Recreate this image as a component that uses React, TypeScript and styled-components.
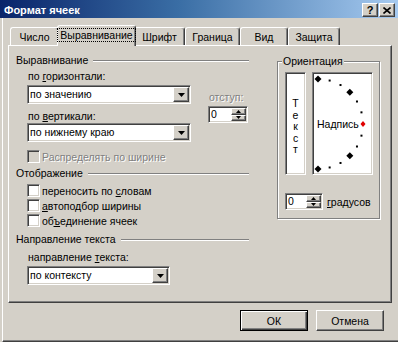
import React from "react";
import styled, { createGlobalStyle, css } from "styled-components";

const GlobalStyle = createGlobalStyle`
  html, body {
    margin: 0;
    padding: 0;
    background: #d4d0c8;
  }
  body {
    font-family: "Liberation Sans", Arial, sans-serif;
    font-size: 10.5px;
    color: #000;
  }
`;

const FACE = "#d4d0c8";
const SHADOW = "#808080";
const DARK = "#404040";

const sunken = css`
  border: 1px solid;
  border-color: ${SHADOW} #fff #fff ${SHADOW};
  box-shadow: inset 1px 1px 0 ${DARK}, inset -1px -1px 0 ${FACE};
  padding: 1px;
`;

const raised = css`
  border: 1px solid;
  border-color: #fff ${DARK} ${DARK} #fff;
  box-shadow: inset -1px -1px 0 ${SHADOW};
`;

const Window = styled.div`
  width: 398px;
  height: 342px;
  display: flex;
  flex-direction: column;
  background: ${FACE};
  overflow: hidden;
`;

const TitleBar = styled.div`
  flex: none;
  height: 18px;
  box-sizing: border-box;
  display: flex;
  align-items: flex-start;
  justify-content: space-between;
  padding: 3px 3px 0 4px;
  background: linear-gradient(90deg, #0a246a 0%, #3a6ea5 45%, #a6caf0 100%);
`;

const Title = styled.span`
  color: #fff;
  font-weight: bold;
  font-size: 11px;
  line-height: 14px;
`;

const CapButtons = styled.div`
  display: flex;
  gap: 1px;
`;

const CapButton = styled.div`
  box-sizing: border-box;
  width: 16px;
  height: 14px;
  background: ${FACE};
  ${raised};
  display: flex;
  align-items: center;
  justify-content: center;
  font-weight: bold;
  font-size: 11px;
  line-height: 12px;
`;

const Body = styled.div`
  flex: 1;
  margin-left: 2px;
  border-left: 1px solid #fff;
  border-bottom: 1px solid ${DARK};
  box-shadow: inset 0 -1px 0 ${SHADOW};
  padding: 7px 6px 0 5px;
  display: flex;
  flex-direction: column;
`;

const TabRow = styled.div`
  display: flex;
  align-items: flex-end;
  height: 20px;
  margin-left: 2px;
`;

const Tab = styled.div<{ $w: number; $active?: boolean }>`
  box-sizing: border-box;
  width: ${(p) => p.$w}px;
  height: 18px;
  background: ${FACE};
  border-top: 1px solid #fff;
  border-left: 1px solid #fff;
  border-right: 1px solid ${DARK};
  box-shadow: inset -1px 0 0 ${SHADOW};
  border-radius: 3px 3px 0 0;
  display: flex;
  align-items: center;
  justify-content: center;
  white-space: nowrap;
  ${(p) =>
    p.$active &&
    css`
      height: 21px;
      margin: 0 -2px -1px;
      position: relative;
      z-index: 1;
      padding-bottom: 2px;
    `}
`;

const FocusText = styled.span`
  outline: 1px dotted #000;
  padding: 0 2px;
  line-height: 12px;
`;

const Panel = styled.div`
  box-sizing: border-box;
  width: 384px;
  height: 258px;
  display: flex;
  align-items: flex-start;
  border: 1px solid;
  border-color: #fff ${DARK} ${DARK} #fff;
  box-shadow: inset -1px -1px 0 ${SHADOW};
  padding: 8px 0 0 6px;
`;

const LeftCol = styled.div`
  width: 234px;
  display: flex;
  flex-direction: column;
`;

const SectionHead = styled.div<{ $mt: number }>`
  display: flex;
  align-items: center;
  gap: 5px;
  height: 13px;
  line-height: 13px;
  margin-top: ${(p) => p.$mt}px;
  padding-left: 1px;
  white-space: nowrap;
`;

const Rule = styled.span`
  flex: 1;
  height: 0;
  border-top: 1px solid ${SHADOW};
  border-bottom: 1px solid #fff;
`;

const Indent = styled.div`
  display: flex;
  flex-direction: column;
  padding-left: 12px;
`;

const AlignRow = styled.div`
  display: flex;
  gap: 17px;
`;

const Stack = styled.div<{ $mt?: number }>`
  display: flex;
  flex-direction: column;
  margin-top: ${(p) => p.$mt ?? 0}px;
`;

const FieldLabel = styled.div<{ $mt: number; $disabled?: boolean }>`
  height: 13px;
  line-height: 13px;
  margin-top: ${(p) => p.$mt}px;
  padding-left: 1px;
  white-space: nowrap;
  ${(p) =>
    p.$disabled &&
    css`
      color: ${SHADOW};
      text-shadow: 1px 1px 0 #fff;
    `}
`;

const Key = styled.span`
  text-decoration: underline;
`;

const Combo = styled.div<{ $w: number; $mt: number }>`
  box-sizing: border-box;
  width: ${(p) => p.$w}px;
  height: 19px;
  margin-top: ${(p) => p.$mt}px;
  ${sunken};
  background: #fff;
  display: flex;
`;

const ComboText = styled.span`
  flex: 1;
  padding-left: 1px;
  line-height: 15px;
  white-space: nowrap;
  overflow: hidden;
`;

const DropButton = styled.div`
  box-sizing: border-box;
  width: 16px;
  background: ${FACE};
  ${raised};
  display: flex;
  align-items: center;
  justify-content: center;
`;

const Spinner = styled.div<{ $w: number; $mt?: number }>`
  box-sizing: border-box;
  width: ${(p) => p.$w}px;
  height: 17px;
  margin-top: ${(p) => p.$mt ?? 0}px;
  ${sunken};
  background: #fff;
  display: flex;
`;

const SpinValue = styled.span`
  flex: 1;
  padding-left: 1px;
  line-height: 13px;
`;

const SpinButtons = styled.div`
  width: 15px;
  display: flex;
  flex-direction: column;
`;

const SpinButton = styled.div`
  flex: 1;
  box-sizing: border-box;
  background: ${FACE};
  ${raised};
  display: flex;
  align-items: center;
  justify-content: center;
`;

const CheckRow = styled.div<{ $mt: number; $disabled?: boolean }>`
  display: flex;
  align-items: center;
  gap: 2px;
  height: 13px;
  margin-top: ${(p) => p.$mt}px;
  white-space: nowrap;
  ${(p) =>
    p.$disabled &&
    css`
      color: ${SHADOW};
      text-shadow: 1px 1px 0 #fff;
    `}
`;

const CheckBox = styled.span<{ $disabled?: boolean }>`
  box-sizing: border-box;
  width: 13px;
  height: 13px;
  ${sunken};
  background: ${(p) => (p.$disabled ? FACE : "#fff")};
`;

const OrientGroup = styled.div`
  position: relative;
  box-sizing: border-box;
  width: 103px;
  height: 158px;
  margin: 7px 0 0 28px;
  border: 1px solid ${SHADOW};
  box-shadow: inset 1px 1px 0 #fff, 1px 1px 0 #fff;
  padding: 10px 0 0 7px;
`;

const Legend = styled.span`
  position: absolute;
  top: -7px;
  left: 4px;
  padding: 0 1px;
  background: ${FACE};
  line-height: 13px;
  white-space: nowrap;
`;

const OrientRow = styled.div`
  display: flex;
  gap: 6px;
  height: 103px;
`;

const VerticalBox = styled.div`
  box-sizing: border-box;
  width: 21px;
  ${sunken};
  background: #fff;
  display: flex;
  flex-direction: column;
  align-items: center;
  justify-content: center;
  padding-top: 8px;
`;

const VLetter = styled.span`
  line-height: 11.5px;
`;

const DialBox = styled.div`
  box-sizing: border-box;
  width: 61px;
  ${sunken};
  background: #fff;
  display: flex;
`;

const DegreeRow = styled.div`
  display: flex;
  align-items: center;
  gap: 4px;
  margin-top: 18px;
`;

const ButtonRow = styled.div`
  display: flex;
  justify-content: flex-end;
  gap: 8px;
  margin-top: 7px;
  padding-right: 8px;
`;

const PushButton = styled.button<{ $default?: boolean }>`
  box-sizing: border-box;
  width: 68px;
  height: 21px;
  padding: 0;
  font: inherit;
  color: #000;
  background: ${FACE};
  ${(p) =>
    p.$default
      ? css`
          border: 1px solid #000;
          box-shadow: inset 1px 1px 0 #fff, inset -1px -1px 0 ${DARK},
            inset -2px -2px 0 ${SHADOW};
        `
      : raised};
`;

function DownArrow({ w = 7 }: { w?: number }) {
  const h = Math.ceil(w / 2);
  return (
    <svg width={w} height={h} viewBox={`0 0 ${w} ${h}`}>
      <polygon points={`0,0 ${w},0 ${w / 2},${h}`} fill="#000" />
    </svg>
  );
}

function UpArrow({ w = 5 }: { w?: number }) {
  const h = Math.ceil(w / 2);
  return (
    <svg width={w} height={h} viewBox={`0 0 ${w} ${h}`}>
      <polygon points={`0,${h} ${w},${h} ${w / 2},0`} fill="#000" />
    </svg>
  );
}

function ComboBox({ w, mt, value }: { w: number; mt: number; value: string }) {
  return (
    <Combo $w={w} $mt={mt}>
      <ComboText>{value}</ComboText>
      <DropButton>
        <DownArrow />
      </DropButton>
    </Combo>
  );
}

function SpinBox({ w, mt }: { w: number; mt?: number }) {
  return (
    <Spinner $w={w} $mt={mt}>
      <SpinValue>0</SpinValue>
      <SpinButtons>
        <SpinButton>
          <UpArrow />
        </SpinButton>
        <SpinButton>
          <DownArrow w={5} />
        </SpinButton>
      </SpinButtons>
    </Spinner>
  );
}

function Check({ mt, children, disabled }: { mt: number; children: React.ReactNode; disabled?: boolean }) {
  return (
    <CheckRow $mt={mt} $disabled={disabled}>
      <CheckBox $disabled={disabled} />
      <span>{children}</span>
    </CheckRow>
  );
}

// half-circle of markers, centre on the left edge of the dial
function Dial() {
  const cx = 4;
  const cy = 50;
  const r = 45;
  const angles = [90, 75, 60, 45, 30, 15, 0, -15, -30, -45, -60, -75, -90];
  return (
    <svg width="57" height="99" viewBox="0 0 57 99">
      {angles.map((a) => {
        const x = cx + r * Math.cos((a * Math.PI) / 180);
        const y = cy - r * Math.sin((a * Math.PI) / 180);
        if (a === 0) {
          return (
            <polygon
              key={a}
              points={`${x},${y - 3} ${x + 2.5},${y} ${x},${y + 3} ${x - 2.5},${y}`}
              fill="#e00000"
            />
          );
        }
        if (a % 45 === 0) {
          return (
            <polygon
              key={a}
              points={`${x},${y - 3.5} ${x + 3.5},${y} ${x},${y + 3.5} ${x - 3.5},${y}`}
              fill="#000"
            />
          );
        }
        return <rect key={a} x={x - 1} y={y - 1} width="2" height="2" fill="#000" />;
      })}
      <text
        x="3"
        y="54"
        fontFamily="Liberation Sans, Arial, sans-serif"
        fontSize="10.5"
        fill="#000"
      >
        Надпись
      </text>
    </svg>
  );
}

const tabs = [
  { label: "Число", w: 49 },
  { label: "Выравнивание", w: 79, active: true },
  { label: "Шрифт", w: 51 },
  { label: "Граница", w: 55 },
  { label: "Вид", w: 48 },
  { label: "Защита", w: 52 },
];

export default function App() {
  return (
    <>
      <GlobalStyle />
      <Window>
        <TitleBar>
          <Title>Формат ячеек</Title>
          <CapButtons>
            <CapButton>?</CapButton>
            <CapButton>
              <svg width="8" height="7" viewBox="0 0 8 7">
                <path d="M0.5 0.5L7.5 6.5M7.5 0.5L0.5 6.5" stroke="#000" strokeWidth="1.6" />
              </svg>
            </CapButton>
          </CapButtons>
        </TitleBar>

        <Body>
          <TabRow>
            {tabs.map((t) => (
              <Tab key={t.label} $w={t.w} $active={t.active}>
                {t.active ? <FocusText>{t.label}</FocusText> : t.label}
              </Tab>
            ))}
          </TabRow>

          <Panel>
            <LeftCol>
              <SectionHead $mt={0}>
                <span>Выравнивание</span>
                <Rule />
              </SectionHead>
              <Indent>
                <AlignRow>
                  <Stack>
                    <FieldLabel $mt={3}>
                      по <Key>г</Key>оризонтали:
                    </FieldLabel>
                    <ComboBox w={164} mt={2} value="по значению" />
                    <FieldLabel $mt={6}>
                      по <Key>в</Key>ертикали:
                    </FieldLabel>
                    <ComboBox w={164} mt={0} value="по нижнему краю" />
                  </Stack>
                  <Stack $mt={24}>
                    <FieldLabel $mt={0} $disabled>
                      отступ:
                    </FieldLabel>
                    <SpinBox w={40} mt={2} />
                  </Stack>
                </AlignRow>
                <Check mt={8} disabled>
                  Распределять по ширине
                </Check>
              </Indent>

              <SectionHead $mt={4}>
                <span>Отображение</span>
                <Rule />
              </SectionHead>
              <Indent>
                <Check mt={4}>
                  переносить по <Key>с</Key>ловам
                </Check>
                <Check mt={2}>
                  <Key>а</Key>втоподбор ширины
                </Check>
                <Check mt={2}>
                  об<Key>ъ</Key>единение ячеек
                </Check>
              </Indent>

              <SectionHead $mt={6}>
                <span>Направление текста</span>
                <Rule />
              </SectionHead>
              <Indent>
                <FieldLabel $mt={5}>
                  направление <Key>т</Key>екста:
                </FieldLabel>
                <ComboBox w={143} mt={2} value="по контексту" />
              </Indent>
            </LeftCol>

            <OrientGroup>
              <Legend>Ориентация</Legend>
              <OrientRow>
                <VerticalBox>
                  {"Текст".split("").map((ch, i) => (
                    <VLetter key={i}>{ch}</VLetter>
                  ))}
                </VerticalBox>
                <DialBox>
                  <Dial />
                </DialBox>
              </OrientRow>
              <DegreeRow>
                <SpinBox w={38} />
                <span>
                  <Key>г</Key>радусов
                </span>
              </DegreeRow>
            </OrientGroup>
          </Panel>

          <ButtonRow>
            <PushButton $default>ОК</PushButton>
            <PushButton>Отмена</PushButton>
          </ButtonRow>
        </Body>
      </Window>
    </>
  );
}
